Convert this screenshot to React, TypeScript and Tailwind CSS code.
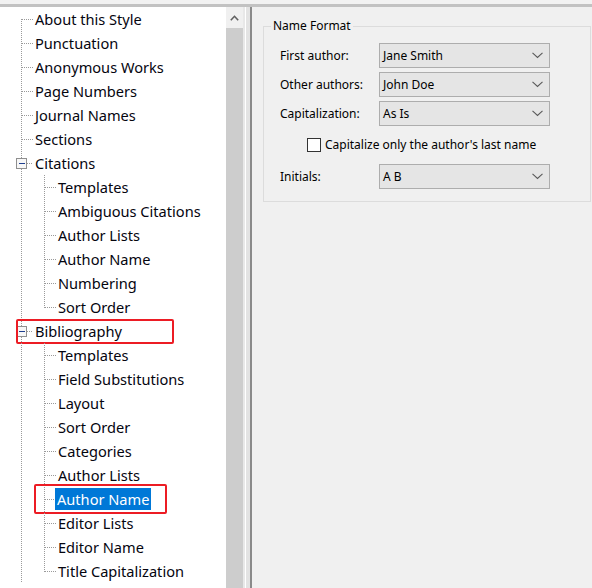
import React from "react";

type Row = {
  level: 0 | 1;
  label: string;
  expander?: boolean;
  first?: boolean;
  last?: boolean;
  selected?: boolean;
  redBox?: "bib" | "author";
};

const rows: Row[] = [
  { level: 0, label: "About this Style", first: true },
  { level: 0, label: "Punctuation" },
  { level: 0, label: "Anonymous Works" },
  { level: 0, label: "Page Numbers" },
  { level: 0, label: "Journal Names" },
  { level: 0, label: "Sections" },
  { level: 0, label: "Citations", expander: true },
  { level: 1, label: "Templates" },
  { level: 1, label: "Ambiguous Citations" },
  { level: 1, label: "Author Lists" },
  { level: 1, label: "Author Name" },
  { level: 1, label: "Numbering" },
  { level: 1, label: "Sort Order", last: true },
  { level: 0, label: "Bibliography", expander: true, redBox: "bib" },
  { level: 1, label: "Templates" },
  { level: 1, label: "Field Substitutions" },
  { level: 1, label: "Layout" },
  { level: 1, label: "Sort Order" },
  { level: 1, label: "Categories" },
  { level: 1, label: "Author Lists" },
  { level: 1, label: "Author Name", selected: true, redBox: "author" },
  { level: 1, label: "Editor Lists" },
  { level: 1, label: "Editor Name" },
  { level: 1, label: "Title Capitalization", last: true },
];

const DOT = "#9a9a9a";

function Connector({ row }: { row: Row }) {
  if (row.level === 0) {
    return (
      <svg width="35" height="24" className="shrink-0" shapeRendering="crispEdges">
        {row.expander ? (
          <>
            <line x1="21.5" y1="0" x2="21.5" y2="7" stroke={DOT} strokeDasharray="1 1" />
            <line x1="21.5" y1="18" x2="21.5" y2="24" stroke={DOT} strokeDasharray="1 1" />
            <rect x="16.5" y="7.5" width="10" height="10" fill="#f7f7f7" stroke="#8f8f8f" />
            <line x1="19" y1="12.5" x2="25" y2="12.5" stroke="#1f3f8f" />
            <line x1="27" y1="12.5" x2="33" y2="12.5" stroke={DOT} strokeDasharray="1 1" />
          </>
        ) : (
          <>
            <line x1="21.5" y1={row.first ? 12 : 0} x2="21.5" y2="24" stroke={DOT} strokeDasharray="1 1" />
            <line x1="22" y1="12.5" x2="33" y2="12.5" stroke={DOT} strokeDasharray="1 1" />
          </>
        )}
      </svg>
    );
  }
  return (
    <svg width="58" height="24" className="shrink-0" shapeRendering="crispEdges">
      <line x1="21.5" y1="0" x2="21.5" y2="24" stroke={DOT} strokeDasharray="1 1" />
      <line x1="44.5" y1="0" x2="44.5" y2={row.last ? 13 : 24} stroke={DOT} strokeDasharray="1 1" />
      <line x1="45" y1="12.5" x2="56" y2="12.5" stroke={DOT} strokeDasharray="1 1" />
    </svg>
  );
}

function TreeRow({ row }: { row: Row }) {
  return (
    <div className="relative flex h-[24px] items-center">
      <Connector row={row} />
      <span
        className={
          row.selected
            ? "ml-[-3px] bg-[#0078d7] px-[2px] leading-[22px] text-white"
            : "leading-[24px] text-[#05050f]"
        }
      >
        {row.label}
      </span>
      {row.redBox === "bib" && (
        <div className="pointer-events-none absolute left-[16px] top-0 h-[25px] w-[158px] rounded-[2px] border-2 border-[#ec1c24]" />
      )}
      {row.redBox === "author" && (
        <div className="pointer-events-none absolute left-[34px] top-[-3px] h-[30px] w-[133px] rounded-[2px] border-2 border-[#ec1c24]" />
      )}
    </div>
  );
}

function Chevron() {
  return (
    <svg width="11" height="7" viewBox="0 0 11 7" className="shrink-0">
      <polyline points="0.5,0.8 5.5,5.5 10.5,0.8" fill="none" stroke="#5a5a5a" strokeWidth="1.1" />
    </svg>
  );
}

function Select({ value }: { value: string }) {
  return (
    <div className="flex h-[25px] w-[171px] items-center justify-between border border-[#adadad] bg-[#e5e5e5] pl-[3px] pr-[6px] text-[12px] text-black">
      <span>{value}</span>
      <Chevron />
    </div>
  );
}

function Field({ label, value }: { label: string; value: string }) {
  return (
    <div className="flex items-center">
      <span className="w-[99px] text-[12px] text-black">{label}</span>
      <Select value={value} />
    </div>
  );
}

export default function App() {
  return (
    <div
      className="flex h-[588px] w-[592px] flex-col overflow-hidden bg-[#f0f0f0]"
      style={{ fontFamily: '"Noto Sans", "Open Sans", sans-serif' }}
    >
      <div className="h-[4px] shrink-0 bg-[#f2f2f2]" />
      <div className="h-[3px] shrink-0 bg-[#c2c2c2]" />
      <div className="flex min-h-0 flex-1">
        {/* tree */}
        <div className="w-[226px] shrink-0 overflow-hidden bg-white text-[14.6px]">
          {rows.map((r, i) => (
            <TreeRow key={i} row={r} />
          ))}
        </div>
        {/* scrollbar */}
        <div className="flex w-[17px] shrink-0 flex-col bg-[#f0f0f0]">
          <div className="flex h-[21px] shrink-0 items-center justify-center">
            <svg width="9" height="6" viewBox="0 0 9 6">
              <polyline points="0.8,5.2 4.5,1.3 8.2,5.2" fill="none" stroke="#606060" strokeWidth="1.6" />
            </svg>
          </div>
          <div className="flex-1 bg-[#cdcdcd]" />
        </div>
        {/* splitter */}
        <div className="w-[2px] shrink-0 bg-[#e8e8e8]" />
        <div className="w-[1px] shrink-0 bg-white" />
        <div className="w-[4px] shrink-0 bg-[#e3e3e3]" />
        <div className="w-[2px] shrink-0 bg-[#8a8a8a]" />
        {/* right panel */}
        <div className="flex-1 pl-[11px] pr-[1px] pt-[11px]">
          <fieldset className="w-[328px] border border-[#dcdcdc] pb-[12px] pl-[16px] pt-[9px]">
            <legend className="ml-[-9px] px-[2px] text-[12px] leading-[16px] text-black">Name Format</legend>
            <div className="flex flex-col gap-[4px]">
              <Field label="First author:" value="Jane Smith" />
              <Field label="Other authors:" value="John Doe" />
              <Field label="Capitalization:" value="As Is" />
            </div>
            <div className="mt-[11px] flex items-center pl-[27px]">
              <div className="h-[14px] w-[14px] border border-[#333] bg-white" />
              <span className="ml-[4px] text-[12px] leading-[16px] text-black">
                Capitalize only the author's last name
              </span>
            </div>
            <div className="mt-[11px]">
              <Field label="Initials:" value="A B" />
            </div>
          </fieldset>
        </div>
      </div>
    </div>
  );
}
